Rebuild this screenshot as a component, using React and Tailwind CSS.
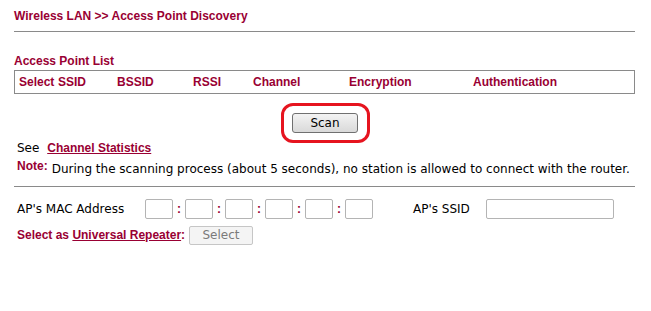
const RED = 'text-[#990033]'

const COLUMNS = [
  { label: 'Select', w: 'w-[39px]' },
  { label: 'SSID', w: 'w-[59px]' },
  { label: 'BSSID', w: 'w-[76px]' },
  { label: 'RSSI', w: 'w-[60px]' },
  { label: 'Channel', w: 'w-[96px]' },
  { label: 'Encryption', w: 'w-[124px]' },
  { label: 'Authentication', w: 'w-[120px]' },
]

function MacBox() {
  return <div className="w-[28px] h-[20px] border border-[#b4b4b4] rounded-[2px] bg-white" />
}

export default function App() {
  return (
    <div className="w-[651px] h-[311px] bg-white font-['DejaVu_Sans',sans-serif] text-[12px] text-black">
      <div className="pl-[14px] w-[635px]">
        {/* header */}
        <div className={`pt-[9px] h-[31px] leading-[14px] font-['Liberation_Sans',sans-serif] font-bold text-[12px] ${RED}`}>
          Wireless LAN &gt;&gt; Access Point Discovery
        </div>
        <div className="border-t border-[#8a8a8a]" />

        <div className={`mt-[21px] h-[16px] leading-[16px] font-['Liberation_Sans',sans-serif] font-bold text-[12px] ${RED}`}>
          Access Point List
        </div>
        <div className={`mt-[1px] h-[24px] border border-[#8a8a8a] flex items-center pl-[4px] leading-[14px] font-['Liberation_Sans',sans-serif] font-bold text-[12px] ${RED}`}>
          {COLUMNS.map(c => (
            <span key={c.label} className={c.w}>{c.label}</span>
          ))}
        </div>

        {/* scan */}
        <div className="mt-[19px] ml-[278px] relative w-[66px]">
          <button className="w-[66px] h-[20px] border border-[#707070] rounded-[3px] bg-gradient-to-b from-[#f3f3f3] to-[#d9d9d9] text-[12px] leading-[18px] text-black">
            Scan
          </button>
          <span className="absolute -left-[11px] -top-[10px] w-[89px] h-[40px] border-[3px] border-[#e6141f] rounded-[12px] pointer-events-none" />
        </div>

        <div className="mt-[8px] pl-[3px] h-[14px] leading-[14px]">
          See{' '}
          <span className={`ml-[4px] font-['Liberation_Sans',sans-serif] font-bold text-[12px] underline ${RED}`}>Channel Statistics</span>
        </div>
        <div className="mt-[6px] pl-[3px] h-[14px] leading-[14px] whitespace-nowrap">
          <span className={`align-[3px] text-[12px] leading-[10px] font-['Liberation_Sans',sans-serif] font-bold ${RED}`}>Note:</span>
          <span className="ml-[4px]">During the scanning process (about 5 seconds), no station is allowed to connect with the router.</span>
        </div>

        <div className="mt-[11px] border-t border-[#8a8a8a]" />

        {/* MAC row */}
        <div className="mt-[12px] pl-[3px] h-[20px] flex items-center leading-[14px]">
          <span className="w-[128px]">AP's MAC Address</span>
          {[0, 1, 2, 3, 4, 5].map(i => (
            <div key={i} className="flex items-center">
              {i > 0 && (
                <span className={`w-[12px] text-center font-['Liberation_Sans',sans-serif] font-bold text-[12px] ${RED}`}>:</span>
              )}
              <MacBox />
            </div>
          ))}
          <span className="ml-[40px] w-[73px]">AP's SSID</span>
          <div className="w-[128px] h-[20px] border border-[#b4b4b4] rounded-[2px] bg-white" />
        </div>

        <div className="mt-[6px] pl-[3px] h-[20px] flex items-center leading-[14px]">
          <span className={`w-[172px] font-['Liberation_Sans',sans-serif] font-bold text-[12px] ${RED}`}>
            Select as <span className="underline">Universal Repeater</span>:
          </span>
          <button disabled className="w-[64px] h-[19px] border border-[#c6c6c6] rounded-[2px] bg-[#f4f4f4] text-[12px] leading-[17px] text-[#7a7a7a]">
            Select
          </button>
        </div>
      </div>
    </div>
  )
}
